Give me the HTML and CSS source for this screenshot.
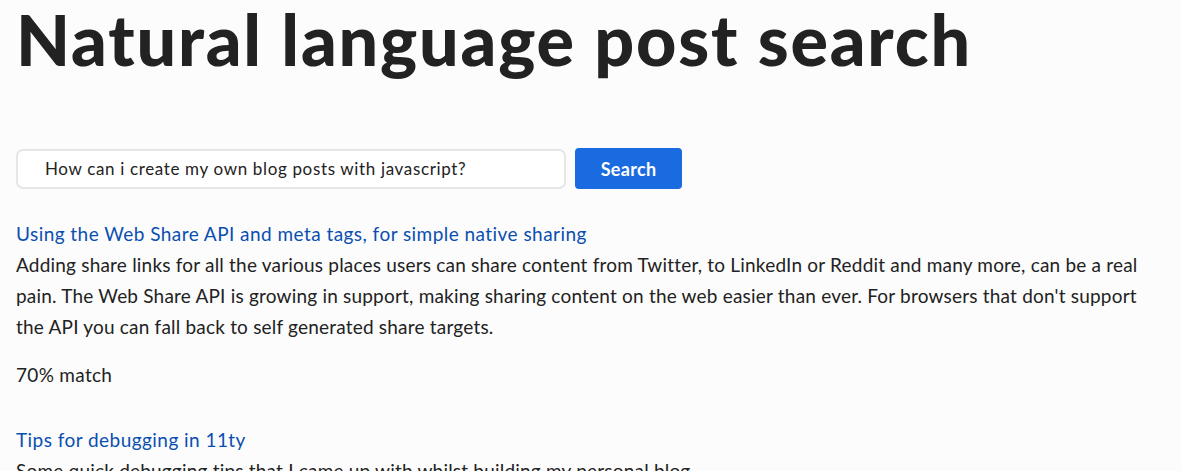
FILE: index.html
```html
<!DOCTYPE html>
<html lang="en">
<head>
<meta charset="utf-8">
<title>Natural language post search</title>
<link rel="stylesheet" href="styles.css">
</head>
<body>
<main class="page">
  <h1 class="title">Natural language post search</h1>
  <form class="search">
    <input class="search-input" type="text" value="How can i create my own blog posts with javascript?">
    <button class="search-btn" type="button">Search</button>
  </form>
  <ul class="results">
    <li class="result">
      <a class="result-link" href="#">Using the Web Share API and meta tags, for simple native sharing</a>
      <p class="result-desc">Adding share links for all the various places users can share content from Twitter, to LinkedIn or Reddit and many more, can be a real pain. The Web Share API is growing in support, making sharing content on the web easier than ever. For browsers that don't support the API you can fall back to self generated share targets.</p>
      <p class="result-match">70% match</p>
    </li>
    <li class="result">
      <a class="result-link" href="#">Tips for debugging in 11ty</a>
      <p class="result-desc">Some quick debugging tips that I came up with whilst building my personal blog.</p>
      <p class="result-match">65% match</p>
    </li>
  </ul>
</main>
</body>
</html>
```
FILE: styles.css
```css
html, body {
  margin: 0;
  padding: 0;
  background: #fcfcfc;
}
body {
  font-family: Lato, "Noto Sans", sans-serif;
  color: #222;
}
.page {
  padding: 0 30px 0 16px;
}
.title {
  font-size: 70px;
  font-weight: 900;
  letter-spacing: 1.8px;
  line-height: 78px;
  margin: 0 0 70px;
  color: #222;
  white-space: nowrap;
}
.search {
  display: flex;
  align-items: center;
  gap: 9px;
  margin-bottom: 29px;
}
.search-input {
  box-sizing: border-box;
  width: 550px;
  height: 40px;
  border: 2px solid #e6e6e6;
  border-radius: 7px;
  background: #fff;
  padding: 0 27px;
  font-family: inherit;
  font-size: 17px;
  letter-spacing: 0.65px;
  color: #222;
}
.search-btn {
  box-sizing: border-box;
  width: 107px;
  height: 41px;
  border: none;
  border-radius: 4px;
  background: #1a6ae0;
  color: #fff;
  font-family: inherit;
  font-size: 18px;
  font-weight: 700;
  letter-spacing: 0.3px;
}
.results {
  list-style: none;
  margin: 0;
  padding: 0;
}
.result {
  margin-bottom: 34px;
}
.result-link {
  color: #0a4fb0;
  text-decoration: none;
  font-size: 19px;
  letter-spacing: 0.45px;
  line-height: 31px;
  display: block;
}
.result-desc {
  margin: 0;
  font-size: 19px;
  letter-spacing: 0.2px;
  line-height: 31px;
}
.result-match {
  margin: 17px 0 0;
  font-size: 19px;
  letter-spacing: 0.3px;
  line-height: 31px;
}
```
